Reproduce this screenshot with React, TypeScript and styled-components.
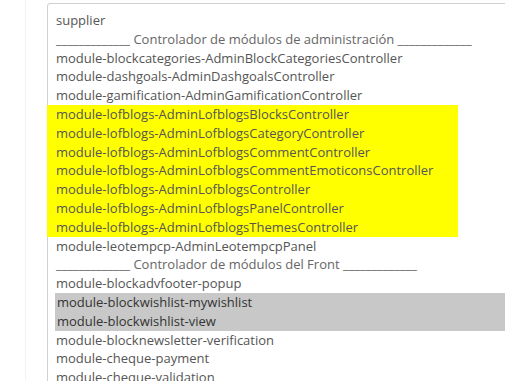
import React from "react";
import styled, { createGlobalStyle } from "styled-components";

const GlobalStyle = createGlobalStyle`
  html, body {
    margin: 0;
    padding: 0;
    background: #fff;
    overflow: hidden;
  }
`;

const Page = styled.div`
  height: 381px;
  margin-left: 25px;
  padding-left: 21px;
  border-left: 1px solid #f3f3f3;
  padding-top: 3px;
  overflow: hidden;
`;

const ListBox = styled.div`
  width: 520px;
  height: 420px;
  border: 1px solid #d0d0d0;
  border-radius: 3px;
  padding-top: 7px;
  font-family: "Open Sans", sans-serif;
  font-size: 13px;
  color: #555;
`;

type Mark = "none" | "yellow" | "selected";

const Option = styled.div<{ $mark: Mark; $muted?: boolean }>`
  height: 18.8px;
  line-height: 18.8px;
  white-space: nowrap;
  padding-left: ${(p) => (p.$mark === "selected" ? "2px" : "9px")};
  margin-left: ${(p) => (p.$mark === "selected" ? "7px" : "-1px")};
  width: ${(p) => (p.$mark === "yellow" ? "402px" : "auto")};
  background: ${(p) =>
    p.$mark === "yellow" ? "#ffff00" : p.$mark === "selected" ? "#c8c8c8" : "transparent"};
  color: ${(p) => (p.$mark === "selected" ? "#333" : p.$muted ? "#666" : "#555")};
`;

const rule = "_____________";

const options: { label: string; mark?: Mark; muted?: boolean }[] = [
  { label: "supplier" },
  { label: `${rule} Controlador de módulos de administración ${rule}`, muted: true },
  { label: "module-blockcategories-AdminBlockCategoriesController" },
  { label: "module-dashgoals-AdminDashgoalsController" },
  { label: "module-gamification-AdminGamificationController" },
  { label: "module-lofblogs-AdminLofblogsBlocksController", mark: "yellow" },
  { label: "module-lofblogs-AdminLofblogsCategoryController", mark: "yellow" },
  { label: "module-lofblogs-AdminLofblogsCommentController", mark: "yellow" },
  { label: "module-lofblogs-AdminLofblogsCommentEmoticonsController", mark: "yellow" },
  { label: "module-lofblogs-AdminLofblogsController", mark: "yellow" },
  { label: "module-lofblogs-AdminLofblogsPanelController", mark: "yellow" },
  { label: "module-lofblogs-AdminLofblogsThemesController", mark: "yellow" },
  { label: "module-leotempcp-AdminLeotempcpPanel" },
  { label: `${rule} Controlador de módulos del Front ${rule}`, muted: true },
  { label: "module-blockadvfooter-popup" },
  { label: "module-blockwishlist-mywishlist", mark: "selected" },
  { label: "module-blockwishlist-view", mark: "selected" },
  { label: "module-blocknewsletter-verification" },
  { label: "module-cheque-payment" },
  { label: "module-cheque-validation" },
];

const App: React.FC = () => (
  <>
    <GlobalStyle />
    <Page>
      <ListBox>
        {options.map((o, i) => (
          <Option key={i} $mark={o.mark ?? "none"} $muted={o.muted}>
            {o.label}
          </Option>
        ))}
      </ListBox>
    </Page>
  </>
);

export default App;
